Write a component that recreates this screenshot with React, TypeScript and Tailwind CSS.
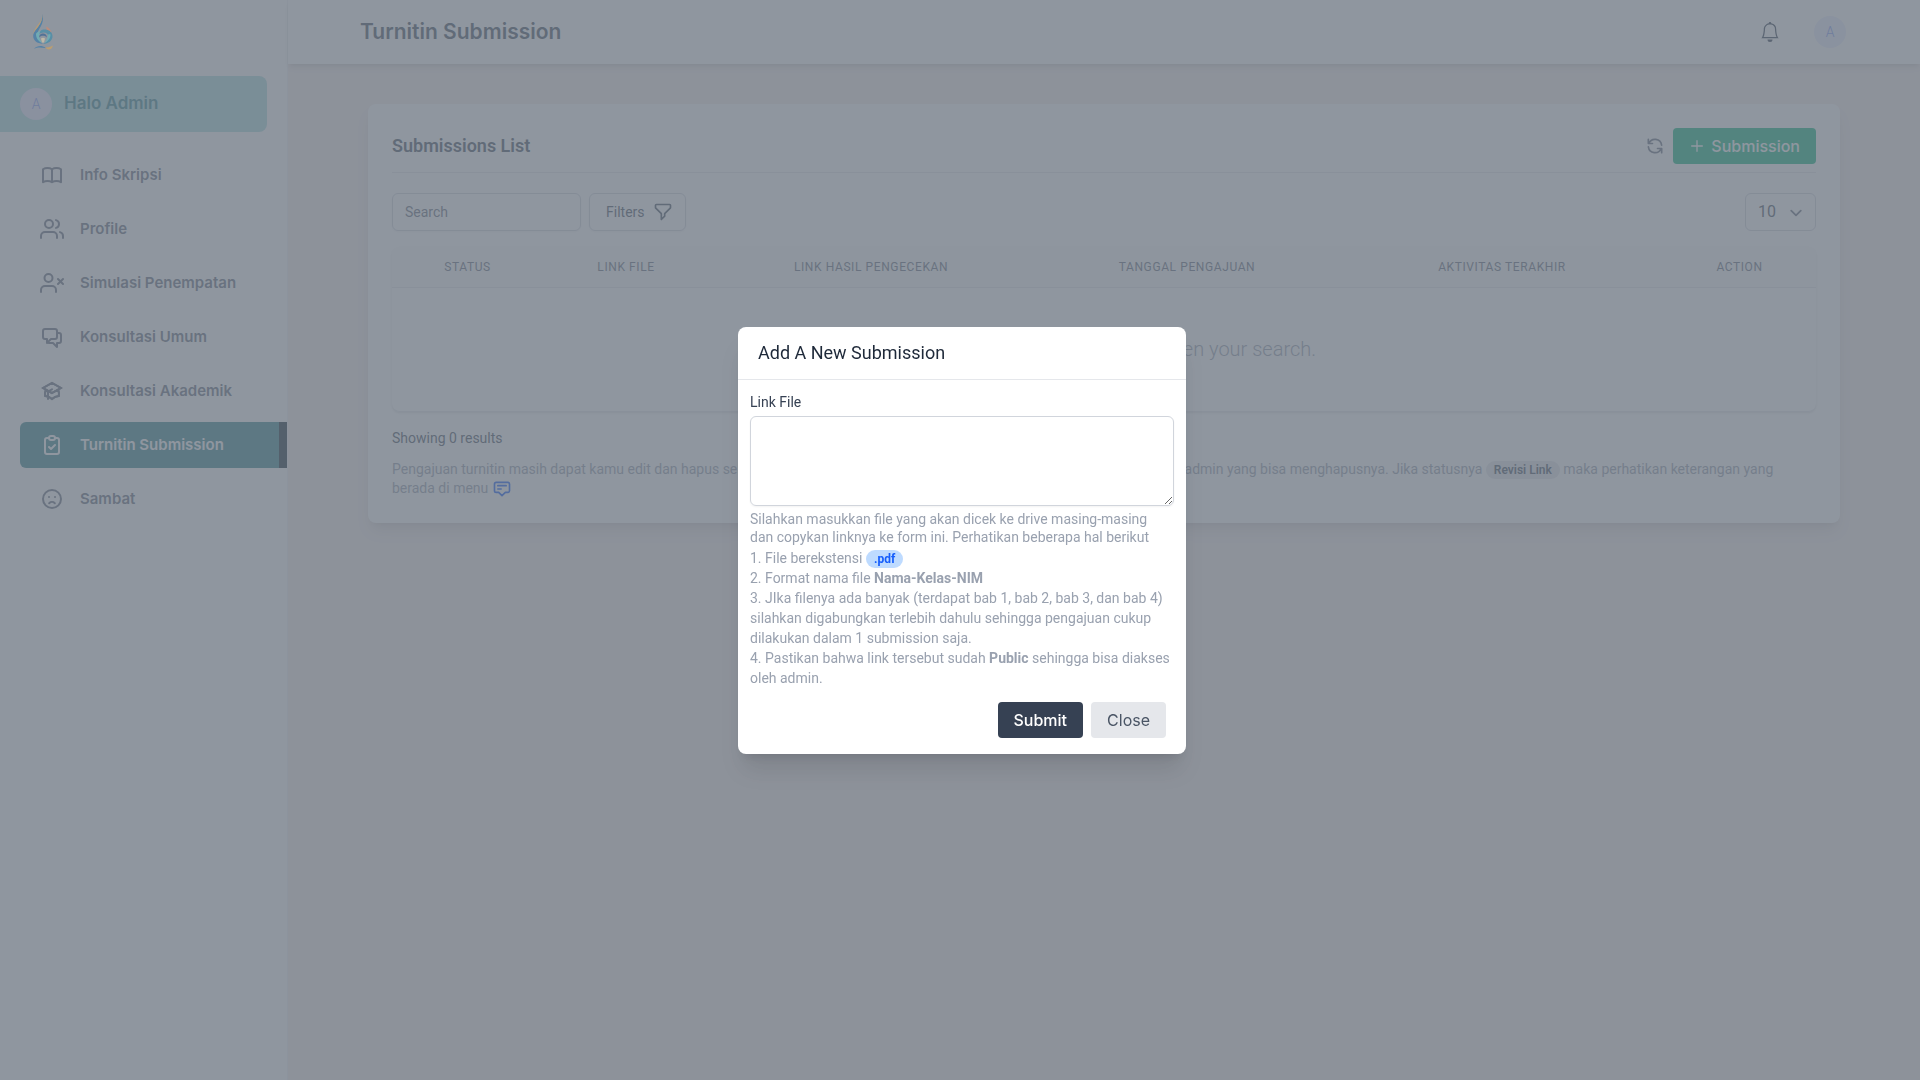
import React from 'react';
import { FiUsers, FiUserX } from 'react-icons/fi';
import { BsBell } from 'react-icons/bs';
import {
  HiOutlineBookOpen,
  HiOutlineChatAlt2,
  HiOutlineAcademicCap,
  HiOutlineClipboardCheck,
  HiOutlineEmojiSad,
  HiOutlineFilter,
  HiOutlineRefresh,
  HiOutlinePlus,
  HiOutlineAnnotation,
} from 'react-icons/hi';

const menu = [
  { label: 'Info Skripsi', icon: HiOutlineBookOpen },
  { label: 'Profile', icon: FiUsers },
  { label: 'Simulasi Penempatan', icon: FiUserX },
  { label: 'Konsultasi Umum', icon: HiOutlineChatAlt2 },
  { label: 'Konsultasi Akademik', icon: HiOutlineAcademicCap },
  { label: 'Turnitin Submission', icon: HiOutlineClipboardCheck, active: true },
  { label: 'Sambat', icon: HiOutlineEmojiSad },
];

const columns = [
  { label: 'Status', width: 'w-[151px]' },
  { label: 'Link File', width: 'w-[166px]' },
  { label: 'Link Hasil Pengecekan', width: 'w-[324px]' },
  { label: 'Tanggal Pengajuan', width: 'w-[308px]' },
  { label: 'Aktivitas Terakhir', width: 'w-[322px]' },
  { label: 'Action', width: 'w-[153px]' },
];

const Logo: React.FC = () => (
  <svg className="relative z-10 w-6 h-9 opacity-50" viewBox="0 0 24 36" fill="none">
    {/* flame */}
    <path d="M10.500 0c1 5 .4 9-1.800 12.500C7 15.500 5.500 17.500 5.500 21c0 4 2 7 5.500 8.800C5 29.500 1.200 26.500 1.200 22c0-4.200 3-6.200 5.300-9.700C8.800 9 10.200 5 10.500 0z" fill="#1c6fae" />
    <path d="M10.500 0c-.3 4-1.700 7.200-4 10C3.800 13 1.600 16.500 1.200 20.500c1-3.500 3.500-5.500 5.600-8.700C9.200 8.500 10.600 5 10.500 0z" fill="#d9a050" />
    {/* ring */}
    <path d="M11.500 15.500c5-.5 9 2.300 9 6.700 0 4.300-4 7.600-9.500 7.600 3.500-1.300 5.500-3.800 5.500-6.800 0-2.800-2-4.500-4.800-4.500-2.400 0-4.200 1-5.200 2.800.4-3.300 2.200-5.500 5-5.800z" fill="#2387ad" />
    <path d="M14 12.500c3 1.200 5 3.500 5.500 6-1.400-1.600-3-2.600-5-3 .2-1 .1-2-.5-3z" fill="#e8845a" />
    <path d="M4 20c0 4 2.500 7.500 6 9-1.800-2.500-2.800-5-2.600-8.500.1-1.500.4-2.600 1-3.500C6 17.500 4.300 18.500 4 20z" fill="#55c0c8" />
    <path d="M18.500 20.500c0 3.800-2.500 7-6 8.300 2.200-2.300 3.400-5 3.400-8 1-.5 1.900-.6 2.600-.3z" fill="#55c0c8" />
    {/* arch */}
    <path d="M7 23.800c.2-3 1.800-4.300 4-4.300s3.800 1.300 4 4.300c-1-1.500-2.300-2-4-2s-3 .5-4 2z" fill="#164f8f" />
    <path d="M9 24.500c1-1 3-1 4 0l-1 4h-2z" fill="#ecd9b0" />
    {/* base */}
    <path d="M2 34.800c2.500-2.800 6-3.300 9-2.400 2 .6 3.500 1.200 5 1-3 1.300-5.500.2-8 .2-2.200 0-4 .4-6 1.200z" fill="#1c6fae" />
    <path d="M13 33c2.800.6 5.500 0 7.800-1.600 0 2.300-1.500 4-4 4-1.800 0-3-1-3.800-2.400z" fill="#e6a545" />
  </svg>
);

const Sidebar: React.FC = () => (
  <aside className="w-72 shrink-0 bg-white border-r border-gray-100">
    <div className="h-16 flex items-center pl-8">
      <Logo />
    </div>
    <div className="mt-3 mr-5 h-14 pl-5 flex items-center gap-3 rounded-r-lg bg-[#addde0]">
      <span className="w-8 h-8 rounded-full bg-[#ebe9ff] text-[#7f9cf5] text-sm font-light flex items-center justify-center">A</span>
      <span className="font-[Inter] font-semibold text-[17px] text-[#3b8690]">Halo Admin</span>
    </div>
    <nav className="mt-5 ml-5 flex flex-col gap-2">
      {menu.map(({ label, icon: Icon, active }) => (
        <a
          key={label}
          href="#"
          className={`h-[46px] pl-5 flex items-center gap-4 font-[Inter] font-semibold text-[15px] rounded-l-md ${
            active ? 'bg-[#3b8690] text-white border-r-8 border-[#172a36]' : 'text-gray-500'
          }`}
        >
          <Icon className="w-6 h-6" />
          {label}
        </a>
      ))}
    </nav>
  </aside>
);

const Header: React.FC = () => (
  <header className="relative h-16 pl-[72px] pr-[74px] flex items-center justify-between bg-white shadow-md">
    <h1 className="font-[Inter] font-semibold text-[21px] text-gray-600">Turnitin Submission</h1>
    <div className="flex items-center gap-[34px]">
      <button aria-label="Notifications" className="text-gray-700">
        <BsBell className="w-5 h-5" />
      </button>
      <button className="w-8 h-8 rounded-full bg-[#ebedff] text-[#7f9cf5] text-sm font-light">A</button>
    </div>
  </header>
);

const SubmissionsCard: React.FC = () => (
  <section className="bg-white rounded-lg shadow-lg p-6">
    <div className="flex items-center justify-between pb-2 border-b border-gray-200">
      <h2 className="text-lg font-semibold text-gray-600">Submissions List</h2>
      <div className="flex items-center gap-2">
        <button aria-label="Refresh" className="text-gray-500">
          <HiOutlineRefresh className="w-5 h-5" />
        </button>
        <button className="h-9 px-4 flex items-center gap-1.5 rounded-sm bg-[#10b981] text-white font-[Inter] font-medium text-base">
          <HiOutlinePlus className="w-4 h-4" />
          Submission
        </button>
      </div>
    </div>

    <div className="mt-5 flex items-center justify-between">
      <div className="flex gap-2">
        <input
          type="text"
          aria-label="Search"
          placeholder="Search"
          className="w-[189px] h-[38px] px-3 text-sm rounded-md border border-gray-300 shadow-xs placeholder:text-gray-500"
        />
        <button className="h-[38px] pl-4 pr-3 flex items-center gap-2 text-sm text-gray-600 rounded-md border border-gray-300 shadow-xs">
          Filters
          <HiOutlineFilter className="w-5 h-5" />
        </button>
      </div>
      <div className="relative">
        <select aria-label="Per page" className="appearance-none w-[71px] h-[38px] pl-3 text-base text-gray-600 rounded-md border border-gray-300">
          <option>10</option>
          <option>25</option>
          <option>50</option>
        </select>
        <svg className="absolute right-2 top-2 w-6 h-6 text-gray-500 pointer-events-none" viewBox="0 0 20 20" fill="none" stroke="currentColor">
          <path strokeLinecap="round" strokeLinejoin="round" strokeWidth="1.5" d="M6 8l4 4 4-4" />
        </svg>
      </div>
    </div>

    <div className="mt-4 overflow-hidden rounded-lg border-b border-gray-200 shadow-sm">
      <table className="w-full table-fixed">
        <thead className="bg-gray-50 border-b border-gray-200">
          <tr>
            {columns.map((col) => (
              <th key={col.label} className={`${col.width} py-3 text-xs font-normal uppercase tracking-wider text-center text-gray-500`}>
                {col.label}
              </th>
            ))}
          </tr>
        </thead>
        <tbody>
          <tr>
            <td colSpan={6} className="h-[123px] text-center text-xl font-light text-gray-400">
              No submissions can be found given your search.
            </td>
          </tr>
        </tbody>
      </table>
    </div>

    <p className="mt-4 text-sm text-gray-600">Showing 0 results</p>
    <p className="mt-3 text-sm leading-[19px] text-gray-400">
      Pengajuan turnitin masih dapat kamu edit dan hapus selama statusnya itu masih pending. Apabila sudah diproses, maka hanya admin yang bisa menghapusnya. Jika statusnya{' '}
      <span className="px-2 py-0.5 rounded-full bg-gray-200 text-gray-600 text-xs font-semibold">Revisi Link</span> maka perhatikan keterangan yang berada di menu{' '}
      <HiOutlineAnnotation className="inline w-5 h-5 text-blue-600" />
    </p>
  </section>
);

const SubmissionModal: React.FC = () => (
  <div className="fixed inset-0 pl-1 flex items-center justify-center bg-[#6a737f]/75">
    <form role="dialog" aria-labelledby="modal-title" className="w-full max-w-md bg-white rounded-lg shadow-xl">
      <h3 id="modal-title" className="px-5 py-3 text-lg text-gray-800 border-b border-gray-200">
        Add A New Submission
      </h3>
      <div className="px-3 pt-3 text-sm text-gray-400">
        <label htmlFor="link-file" className="block text-gray-700">
          Link File
        </label>
        <textarea id="link-file" className="mt-1 block w-full h-[90px] rounded-md border border-gray-300 shadow-xs" />
        <p className="mt-1 pr-2 leading-[18px]">
          Silahkan masukkan file yang akan dicek ke drive masing-masing dan copykan linknya ke form ini. Perhatikan beberapa hal berikut
        </p>
        <div className="mt-0.5">
          <p>
            1. File berekstensi <span className="px-2 py-0.5 rounded-full bg-blue-200 text-blue-600 text-xs font-bold">.pdf</span>
          </p>
          <p>
            2. Format nama file <b>Nama-Kelas-NIM</b>
          </p>
          <p>3. JIka filenya ada banyak (terdapat bab 1, bab 2, bab 3, dan bab 4) silahkan digabungkan terlebih dahulu sehingga pengajuan cukup dilakukan dalam 1 submission saja.</p>
          <p>
            4. Pastikan bahwa link tersebut sudah <b>Public</b> sehingga bisa diakses oleh admin.
          </p>
        </div>
      </div>
      <div className="pt-3.5 pb-4 px-5 flex justify-end gap-2 font-[Inter] text-base">
        <button type="submit" className="h-9 px-4 rounded-sm bg-gray-700 text-white font-medium">
          Submit
        </button>
        <button type="button" className="h-9 px-4 rounded-sm bg-gray-200 text-gray-600">
          Close
        </button>
      </div>
    </form>
  </div>
);

const App: React.FC = () => (
  <div className="min-h-screen flex bg-[#f5edeb] font-[Roboto,sans-serif]">
    <Sidebar />
    <div className="flex-1 min-w-0">
      <Header />
      <main className="px-20 py-10">
        <SubmissionsCard />
      </main>
    </div>
    <SubmissionModal />
  </div>
);

export default App;
